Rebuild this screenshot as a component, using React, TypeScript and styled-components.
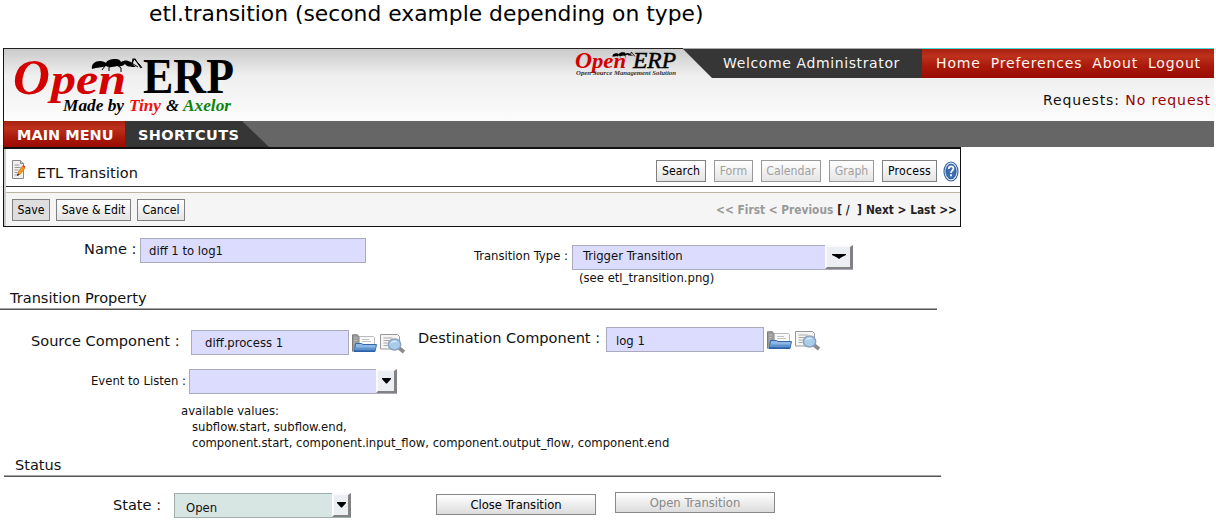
import React from "react";
import styled, { createGlobalStyle } from "styled-components";

const GlobalStyle = createGlobalStyle`
  body {
    margin: 0;
    background: #fff;
    color: #111;
    font-family: "DejaVu Sans", sans-serif;
  }
  * { box-sizing: border-box; }
`;

const narrow = `"DejaVu Sans Condensed", "DejaVu Sans", sans-serif`;

const Page = styled.div`
  width: 1216px;
  height: 527px;
  overflow: hidden;
  display: flex;
  flex-direction: column;
  align-items: flex-start;
`;

const Caption = styled.h1`
  margin: 0;
  height: 48px;
  padding-left: 149px;
  font-size: 21.83px;
  font-weight: 400;
  line-height: 28px;
  white-space: nowrap;
  color: #000;
`;

/* ---------- header ---------- */
const Header = styled.header`
  width: 1211px;
  height: 73px;
  margin-left: 3px;
  display: flex;
  border-left: 1px solid #111;
  background: linear-gradient(#c9c9c9, #efefef 38%, #fcfcfc);
`;

const LogoArea = styled.div`
  width: 679px;
  border-top: 1px solid #222;
  display: flex;
  justify-content: space-between;
`;

const HeaderRight = styled.div`
  flex: 1;
  display: flex;
  flex-direction: column;
`;

const TopBar = styled.div`
  height: 30px;
  display: flex;
`;

const Welcome = styled.div`
  width: 239px;
  padding-left: 40px;
  border-top: 1px solid #aaa;
  background: #363636;
  clip-path: polygon(0 0, 100% 0, 100% 100%, 29px 100%, 0 1px);
  color: #f5f5f5;
  font-size: 14px;
  line-height: 28px;
  letter-spacing: 0.62px;
  white-space: nowrap;
`;

const TopLinks = styled.nav`
  flex: 1;
  display: flex;
  justify-content: space-between;
  padding: 0 13px 0 14px;
  border-top: 1px solid #4fd8dc;
  background: linear-gradient(#a8200f, #bd311c 25%, #a9190b 60%, #990b02);
  font-size: 14px;
  line-height: 28px;
  letter-spacing: 0.85px;
  color: #fff4f0;
`;

const Requests = styled.div`
  align-self: flex-end;
  margin-top: 11px;
  padding-right: 3px;
  font-size: 14px;
  line-height: 22px;
  letter-spacing: 0.9px;
  white-space: nowrap;
  span { color: #980000; }
`;

const MenuBar = styled.nav`
  width: 1211px;
  height: 26px;
  margin-left: 3px;
  display: flex;
  border-left: 1px solid #222;
  background: #666;
  color: #fff;
  font-size: 14.5px;
  font-weight: 700;
  line-height: 29px;
  white-space: nowrap;
`;

const MainMenu = styled.div`
  width: 121px;
  padding-left: 13px;
  background: linear-gradient(#a8200f, #bd311c 28%, #a9190b 65%, #990b02);
`;

const Shortcuts = styled.div`
  width: 144px;
  padding-left: 13px;
  letter-spacing: 0.35px;
  background: #363636;
  clip-path: polygon(0 0, 117px 0, 100% 100%, 0 100%);
`;

/* ---------- view panel ---------- */
const Panel = styled.section`
  width: 958px;
  height: 80px;
  margin-left: 3px;
  border: 1px solid #111;
  border-top: 2px solid #111;
  padding-left: 2px;
  background: linear-gradient(90deg, #ccc 2px, #fff 2px);
`;

const ViewRow = styled.div`
  height: 38px;
  display: flex;
  border-bottom: 1px solid #333;
  background: #fff;
`;

const ViewTitle = styled.h2`
  flex: 1;
  margin: 0 0 0 12px;
  font-size: 14.5px;
  font-weight: 400;
  line-height: 48px;
`;

const ViewIcon = styled.div`
  width: 13px;
  margin: 11px 0 0 6px;
`;

const ViewButtons = styled.div`
  display: flex;
  gap: 8px;
  padding-top: 11px;
`;

const HelpIcon = styled.div`
  margin: 12px 1px 0 6px;
`;

const Toolbar = styled.div`
  height: 34px;
  margin-top: 5px;
  display: flex;
  align-items: flex-start;
  gap: 6px;
  padding: 6px 3px 0 6px;
  border-top: 1px solid #bbb5a6;
  background: #f5f5f5;
`;

const SmallButton = styled.button<{ $w: number; $muted?: boolean; $active?: boolean; $ls?: number }>`
  width: ${(p) => p.$w}px;
  height: 22px;
  padding: 0;
  border: 1px solid ${(p) => (p.$muted ? "#999" : "#808080")};
  background: ${(p) => (p.$active ? "#dedede" : "linear-gradient(#fff, #e4e4e4)")};
  color: ${(p) => (p.$muted ? "#a0a0a0" : "#000")};
  font: 12.2px ${narrow};
  letter-spacing: ${(p) => p.$ls ?? 0}px;
  white-space: nowrap;
`;

const Pager = styled.div`
  margin-left: auto;
  display: flex;
  gap: 4px;
  font: 700 11.8px/22px ${narrow};
  color: #222;
  white-space: pre;
`;

const Faded = styled.span`
  color: #999;
`;

/* ---------- form ---------- */
const FormRow = styled.div<{ $h: number; $left: number }>`
  height: ${(p) => p.$h}px;
  padding-left: ${(p) => p.$left}px;
  display: flex;
  align-items: flex-start;
`;

const Label = styled.label<{ $w: number; $top: number; $small?: boolean }>`
  width: ${(p) => p.$w}px;
  margin-top: ${(p) => p.$top}px;
  flex: none;
  font: ${(p) => (p.$small ? `12.95px/16px ${narrow}` : `14.55px/20px "DejaVu Sans", sans-serif`)};
  white-space: nowrap;
`;

const Field = styled.div<{ $w: number; $top: number; $pad: number; $mint?: boolean; $drop?: number }>`
  width: ${(p) => p.$w}px;
  height: 25px;
  margin-top: ${(p) => p.$top}px;
  padding-left: ${(p) => p.$pad}px;
  flex: none;
  display: flex;
  justify-content: space-between;
  border: 1px solid ${(p) => (p.$mint ? "#9fadab" : "#aaaabc")};
  background: ${(p) => (p.$mint ? "#d7e5e3" : "#dcdcff")};
  font: 12.95px/16px ${narrow};
  white-space: nowrap;
  > span { margin-top: ${(p) => p.$drop ?? 4}px; }
`;

const Arrow = styled.div<{ $w: number }>`
  width: ${(p) => p.$w}px;
  height: 24px;
  margin-top: -1px;
  margin-right: -1px;
  display: flex;
  align-items: center;
  justify-content: center;
  border: 2px solid;
  border-color: #fbfbfd #828282 #828282 #fbfbfd;
  border-right-width: 3px;
  background: #ebeef2;
`;

const SelectColumn = styled.div`
  display: flex;
  flex-direction: column;
`;

const Note = styled.div<{ $left?: number }>`
  padding-left: ${(p) => p.$left ?? 0}px;
  font: 12.95px/16px ${narrow};
  white-space: nowrap;
`;

const SectionTitle = styled.h3<{ $w: number; $left: number; $pad: number }>`
  width: ${(p) => p.$w}px;
  margin: 0 0 0 ${(p) => p.$left}px;
  padding: 0 0 0 ${(p) => p.$pad}px;
  height: 22px;
  font-size: 14.55px;
  font-weight: 400;
  line-height: 20px;
  border-bottom: 1px solid #555;
  box-shadow: inset 0 -1px #a5a5a5;
`;

const IconPair = styled.div<{ $top: number }>`
  width: 56px;
  display: flex;
  gap: 3px;
  margin: ${(p) => p.$top}px 0 0 3px;
`;

const ActionButton = styled.button<{ $muted?: boolean; $top: number; $left: number }>`
  width: 160px;
  height: 21px;
  margin: ${(p) => p.$top}px 0 0 ${(p) => p.$left}px;
  padding: 0;
  border: 1px solid #888;
  background: linear-gradient(#fff, #dcdcdc);
  color: ${(p) => (p.$muted ? "#888" : "#000")};
  font: 12.9px/17px ${narrow};
`;

const Ant = () => (
  <g fill="#000">
    <path d="M79 13c-1-5 3-8 8-8 3 0 5 1 6 2 1-3 5-4 9-4 4 0 5 1 6 3 3-2 7-2 9 0 2 1 4 4 6 5-5 0-9 0-11-3-2 2-5 3-8 2-4 1-8 2-11 0-4 2-9 1-14 3z" />
    <path
      d="M92 10l-3 4M100 9l-4 2 0 4M104 9l4 3 0 4M117 6l8 5M119 8l2-5 6 6 2 3"
      fill="none"
      stroke="#000"
      strokeWidth="1"
    />
    <path d="M119 8l1-5 2 0 6 9" fill="none" stroke="#000" strokeWidth="1.2" />
  </g>
);

const LogoSvg = styled.svg`
  flex: none;
  overflow: visible;
  font-family: "Liberation Serif", serif;
`;

const TinyLogo = () => (
  <LogoSvg width="235" height="71" viewBox="0 0 235 71">
    <text y="45" fontStyle="italic" fontWeight="700" fill="#d40000">
      <tspan x="9" fontSize="51">O</tspan>
      <tspan x="47" fontSize="45" textLength="75" lengthAdjust="spacingAndGlyphs">pen</tspan>
    </text>
    <text x="139" y="44" fontSize="50" fontWeight="700" fill="#000" textLength="91" lengthAdjust="spacingAndGlyphs">ERP</text>
    <g fontSize="17" fontStyle="italic" fontWeight="700">
      <text x="59" y="62" textLength="61" lengthAdjust="spacingAndGlyphs">Made by</text>
      <text x="125" y="62" fill="#f01010" textLength="32" lengthAdjust="spacingAndGlyphs">Tiny</text>
      <text x="162" y="62" textLength="13" lengthAdjust="spacingAndGlyphs">&amp;</text>
      <text x="179" y="62" fill="#0c840c" textLength="48" lengthAdjust="spacingAndGlyphs">Axelor</text>
    </g>
    <g transform="translate(9 7)"><Ant /></g>
  </LogoSvg>
);

const SourceLogo = () => (
  <LogoSvg width="110" height="32" viewBox="0 0 110 32">
    <g fontStyle="italic">
      <text y="19" fontWeight="700" fill="#d40000">
        <tspan x="2" fontSize="23.5">O</tspan>
        <tspan x="19" fontSize="21" textLength="34" lengthAdjust="spacingAndGlyphs">pen</tspan>
      </text>
      <text x="60" y="19" fontSize="23.5" stroke="#000" strokeWidth="0.5" textLength="43" lengthAdjust="spacingAndGlyphs">ERP</text>
      <text x="3" y="26" fontSize="6" fontWeight="700" fill="#333" textLength="100" lengthAdjust="spacingAndGlyphs">Open Source Management Solution</text>
    </g>
    <g transform="translate(4 2) scale(0.45)"><Ant /></g>
  </LogoSvg>
);

const EditDocument = () => (
  <svg width="14" height="20" viewBox="0 0 14 20">
    <path d="M.5.5h8l3 3v15H.5z" fill="#f0f0ee" stroke="#888" />
    <path d="M8.500.5v3h3" fill="#ccc" stroke="#888" />
    <path d="M2.500 5h5M2.500 7.500h6M2.500 10h4M2.500 12.500h3M2.500 15h3" stroke="#999" />
    <path d="M5.500 15.500l1-4 4-5.500 2.500 2-4.500 6z" fill="#f59a1c" stroke="#c46a0a" strokeWidth=".6" />
    <path d="M5 16l.7-2.600 1.800 1.300z" fill="#222" />
    <path d="M10.500 6l.8-1 2 1.600-.5 1.300z" fill="#d33" />
  </svg>
);

const Help = () => (
  <svg width="16" height="21" viewBox="0 0 16 21">
    <ellipse cx="8" cy="10.500" rx="7" ry="9.500" fill="#fff" stroke="#3c68a6" strokeWidth="1.200" />
    <ellipse cx="8" cy="10.500" rx="5.200" ry="7.500" fill="#3b6db3" stroke="#244f8c" strokeWidth=".8" />
    <path d="M5.700 8c.2-3.500 5-3.300 4.700-.3-.2 1.900-2.400 2-2.400 4.300" fill="none" stroke="#fff" strokeWidth="1.700" />
    <rect x="7.100" y="13.300" width="1.800" height="2" fill="#fff" />
  </svg>
);

const Folder = () => (
  <svg width="25" height="19" viewBox="0 0 25 19">
    <path d="M.5 17.500V.8h5l1 1.700h7V6" fill="#9a9a9a" stroke="#7c7c7c" />
    <path d="M2 4h3M2 6.500h3M2 9h2" stroke="#bbb" />
    <path d="M7.500 2.500h14l1 1V12h-15z" fill="#fafafa" stroke="#bbb" />
    <path d="M10 5.500h7M10 7.500h9" stroke="#c4c4c4" />
    <path d="M3.500 9.500h6l1.500 1h13.500l-1.500 7H2.500z" fill="#8fb6e4" stroke="#3469ab" />
    <path d="M3.500 13.500h20l-.8 4H3z" fill="#5f93d0" />
    <path d="M1.500 16.300h21.500v1.700H1.500z" fill="#2a61a8" />
  </svg>
);

const SearchDocument = () => (
  <svg width="26" height="20" viewBox="0 0 26 20">
    <path d="M.5.5h17l2 2v12.500H.5z" fill="#f5f5f3" stroke="#999" />
    <path d="M3.500 4h9M3.500 6.500h6M3.500 9h4M3.500 11.500h4" stroke="#aaa" />
    <path d="M19 14l5 4" stroke="#8a8a8a" strokeWidth="3.600" />
    <ellipse cx="14.500" cy="10.500" rx="6.200" ry="5.500" fill="#a9cbec" stroke="#8ba3c0" strokeWidth="1.500" />
    <path d="M10.500 9.500c1-3 5-3.500 7-1.500-2 0-5 0-7 1.500z" fill="#dcecfa" />
  </svg>
);

const Triangle = ({ wide }: { wide?: boolean }) =>
  wide ? (
    <svg width="14" height="6" viewBox="0 0 14 6"><path d="M0 0h14v1L9 3.500 7 5 5 3.500 0 1z" /></svg>
  ) : (
    <svg width="9" height="6" viewBox="0 0 9 6"><path d="M0 0h9v1L5 5.500H4L0 1z" /></svg>
  );

export default function App() {
  return (
    <>
      <GlobalStyle />
      <Page>
        <Caption>etl.transition (second example depending on type)</Caption>
        <Header>
          <LogoArea>
            <TinyLogo />
            <SourceLogo />
          </LogoArea>
          <HeaderRight>
            <TopBar>
              <Welcome>Welcome Administrator</Welcome>
              <TopLinks>
                <span>Home</span>
                <span>Preferences</span>
                <span>About</span>
                <span>Logout</span>
              </TopLinks>
            </TopBar>
            <Requests>Requests: <span>No request</span></Requests>
          </HeaderRight>
        </Header>
        <MenuBar>
          <MainMenu>MAIN MENU</MainMenu>
          <Shortcuts>SHORTCUTS</Shortcuts>
        </MenuBar>

        <Panel>
          <ViewRow>
            <ViewIcon><EditDocument /></ViewIcon>
            <ViewTitle>ETL Transition</ViewTitle>
            <ViewButtons>
              <SmallButton $w={50} $ls={0.1}>Search</SmallButton>
              <SmallButton $w={39} $muted>Form</SmallButton>
              <SmallButton $w={60} $muted>Calendar</SmallButton>
              <SmallButton $w={45} $muted>Graph</SmallButton>
              <SmallButton $w={55} $ls={0.2}>Process</SmallButton>
            </ViewButtons>
            <HelpIcon><Help /></HelpIcon>
          </ViewRow>
          <Toolbar>
            <SmallButton $w={38} $active>Save</SmallButton>
            <SmallButton $w={75}>Save &amp; Edit</SmallButton>
            <SmallButton $w={48}>Cancel</SmallButton>
            <Pager>
              <Faded>{"<< First < Previous"}</Faded>
              <span>{"[ /  ]"}</span>
              <span>{"Next > Last >>"}</span>
            </Pager>
          </Toolbar>
        </Panel>

        <FormRow $h={61} $left={84}>
          <Label $w={56} $top={12}>Name :</Label>
          <Field $w={226} $top={11} $pad={8} $drop={4}><span>diff 1 to log1</span></Field>
          <FormRow $h={61} $left={108}>
            <Label $w={98} $top={21} $small>Transition Type :</Label>
            <SelectColumn>
              <Field $w={281} $top={18} $pad={10} $drop={2}>
                <span>Trigger Transition</span>
                <Arrow $w={28}><Triangle wide /></Arrow>
              </Field>
              <Note $left={7}>(see etl_transition.png)</Note>
            </SelectColumn>
          </FormRow>
        </FormRow>

        <SectionTitle $w={937} $left={0} $pad={10}>Transition Property</SectionTitle>
        <FormRow $h={59} $left={31}>
          <Label $w={160} $top={21}>Source Component :</Label>
          <Field $w={158} $top={20} $pad={13}><span>diff.process 1</span></Field>
          <IconPair $top={24}><Folder /><SearchDocument /></IconPair>
          <FormRow $h={59} $left={10}>
            <Label $w={188} $top={18}>Destination Component :</Label>
            <Field $w={158} $top={17} $pad={9} $drop={5}><span>log 1</span></Field>
            <IconPair $top={21}><Folder /><SearchDocument /></IconPair>
          </FormRow>
        </FormRow>
        <FormRow $h={34} $left={91}>
          <Label $w={98} $top={4} $small>Event to Listen :</Label>
          <Field $w={208} $top={0} $pad={0}>
            <span />
            <Arrow $w={21}><Triangle /></Arrow>
          </Field>
        </FormRow>
        <Note $left={181}>available values:</Note>
        <Note $left={192}>subflow.start, subflow.end,</Note>
        <Note $left={192}>component.start, component.input_flow, component.output_flow, component.end</Note>
        <FormRow $h={4} $left={0} />

        <SectionTitle $w={937} $left={4} $pad={11}>Status</SectionTitle>
        <FormRow $h={48} $left={113}>
          <Label $w={61} $top={18}>State :</Label>
          <Field $w={177} $top={16} $pad={11} $drop={6} $mint>
            <span>Open</span>
            <Arrow $w={19}><Triangle /></Arrow>
          </Field>
          <ActionButton $top={17} $left={85}>Close Transition</ActionButton>
          <ActionButton $top={15} $left={19} $muted>Open Transition</ActionButton>
        </FormRow>
      </Page>
    </>
  );
}
